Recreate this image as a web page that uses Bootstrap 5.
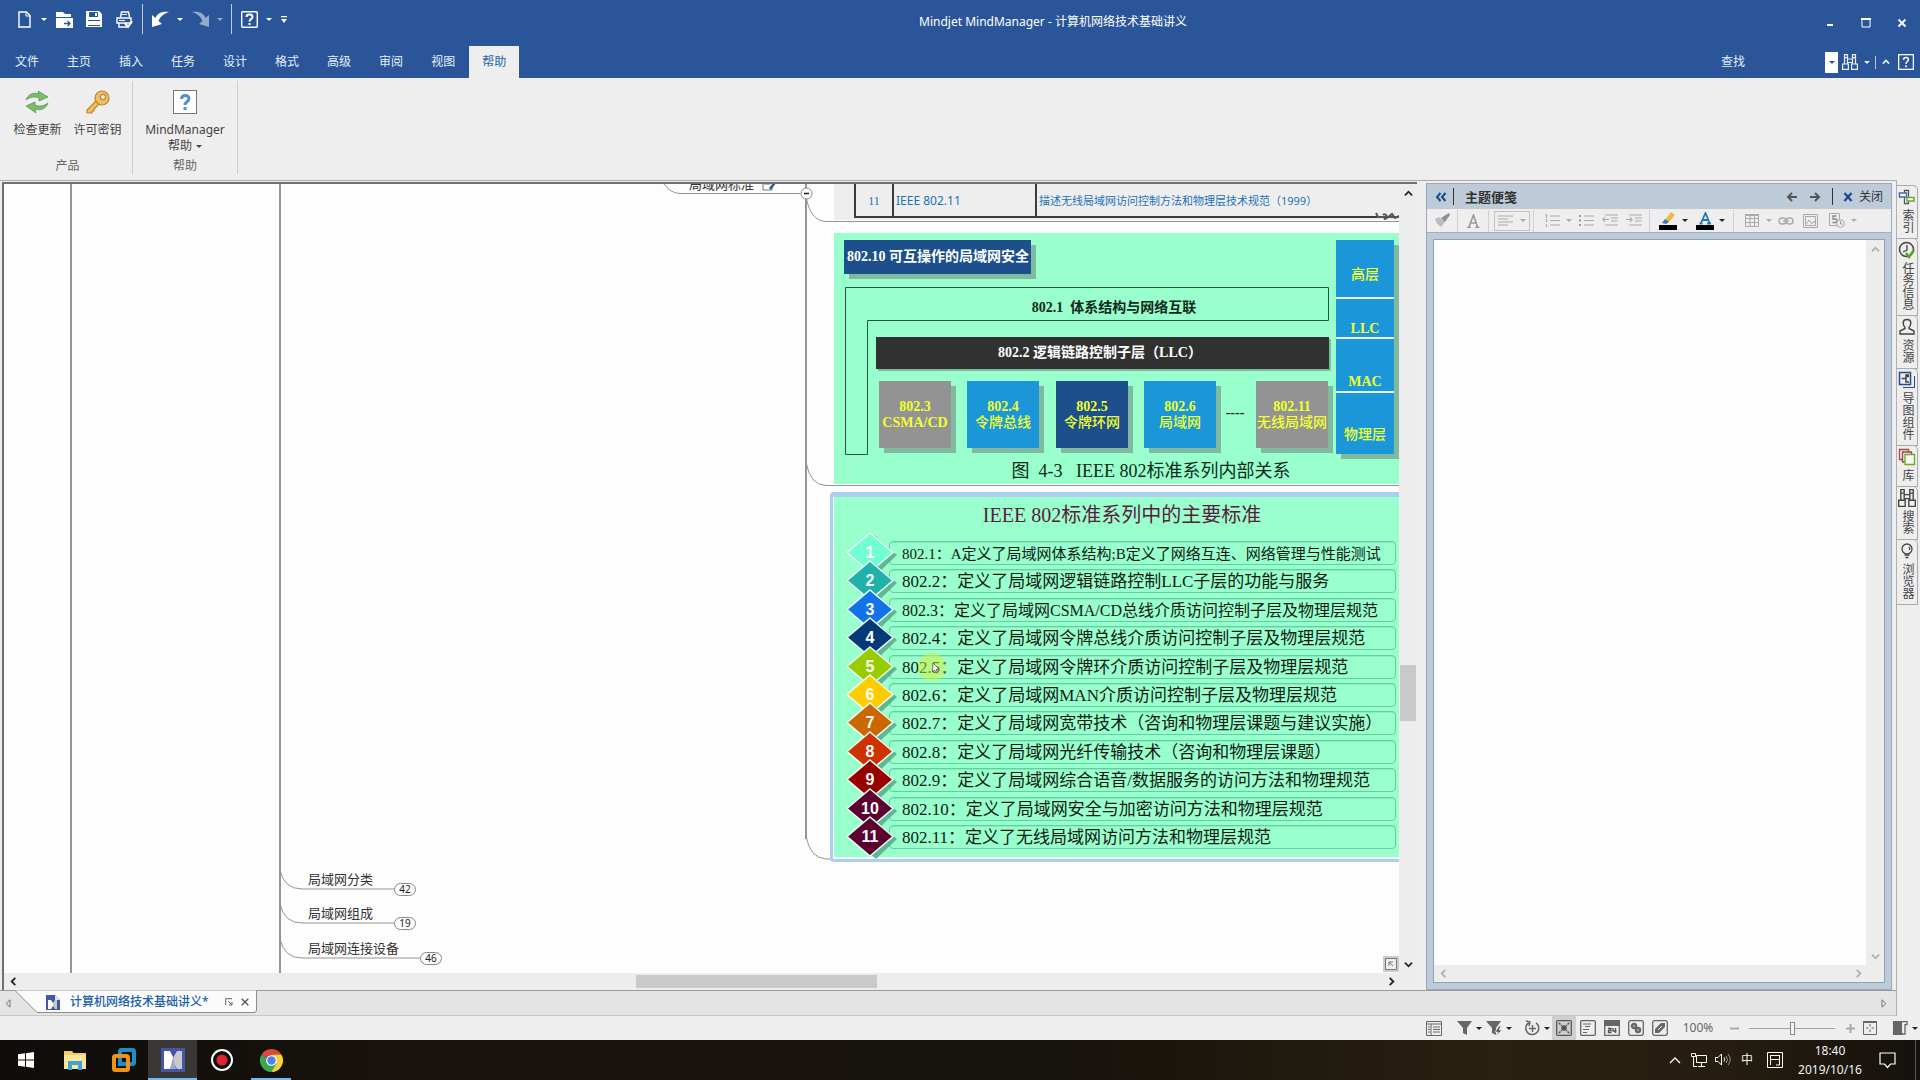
<!DOCTYPE html>
<html lang="zh-CN">
<head>
<meta charset="utf-8">
<meta name="viewport" content="width=device-width, initial-scale=1">
<title>Mindjet MindManager - 计算机网络技术基础讲义</title>
<link href="https://cdn.jsdelivr.net/npm/bootstrap@5.3.0/dist/css/bootstrap.min.css" rel="stylesheet">
<style>
  body { font-family: "Noto Sans", "Noto Sans CJK SC", sans-serif; font-size: 12px; line-height: 16px; color: #444; background: #eeeeee; }
  button, input { font: inherit; color: inherit; }
  svg { display: block; flex: none; }
  .plain { background: none; border: 0; padding: 0; display: flex; align-items: center; justify-content: center; flex: none; }
  a { color: inherit; text-decoration: none; }
  .w10 { width: 10px; } .w20 { width: 20px; } .w24 { width: 24px; } .w30 { width: 30px; }
  .gap-l { margin-left: 3px; }
  .caret { width: 0; height: 0; border: 3px solid transparent; border-top-color: currentColor; border-bottom-width: 0; }
  .shrinkable { min-height: 0; min-width: 0; }

  /* title bar and ribbon */
  .titlebar { background: #2a5699; height: 46px; color: #fff; }
  .titlebar .app-title { padding-top: 14px; }
  .quick { height: 38px; padding-left: 9px; }
  .qsep { width: 6px; height: 30px; flex: none; background: linear-gradient(#b9cbe6, #b9cbe6) center / 1px 100% no-repeat; }
  .faded { opacity: .5; }
  .winbtn { width: 36px; height: 38px; }
  .tabbar { background: #2a5699; height: 32px; color: #e6eefa; padding-left: 1px; }
  .tabbar .nav-link { color: #e6eefa; padding: 0 14px; line-height: 32px; border-radius: 0; }
  .tabbar .nav-link.active { background: #eeeeee; color: #1b66ad; padding: 0 13px; }
  .tabbar .vr { height: 13px; align-self: center; }
  .find-box { width: 80px; height: 20px; background: transparent; border: 0; outline: 0; color: #fff; }
  .find-drop { width: 13px; height: 21px; background: #fff; color: #2a5699; }
  .ribbon { height: 102px; padding: 3px 0 5px 3px; border-bottom: 1px solid #eee; }
  .rgroup { border-right: 1px solid #cdcdcd; color: #666; }
  .rgroup.g1 { width: 130px; } .rgroup.g2 { width: 105px; }
  .rbtn { flex-direction: column; justify-content: flex-start; color: #444; }
  .rbtn .glyph { height: 41px; padding-top: 9px; }
  .rbtns { gap: 12px; }

  /* workspace */
  .work { border-top: 1px solid #ababab; min-height: 0; }
  .mappane { border: solid #707070; border-width: 2px 0 0 2px; margin: 1px 0 0 2px; }
  .canvas { background: #fdfdfd; overflow: hidden; min-height: 0; }
  .vbar, .hbar { background: #ededed; }
  .vbar { width: 18px; }
  .hbar { height: 17px; }
  .hbar .before-corner { margin-right: 17px; }
  .vthumb { width: 16px; background: #c9c9c9; height: 56px; margin-top: 463px; }
  .hthumb { height: 13px; background: #c9c9c9; width: 241px; margin-left: 614px; }
  .vbtn { width: 18px; height: 18px; }
  .corner { width: 16px; height: 16px; right: 0; bottom: 1px; background: #ccc; }
  .map-node { position: absolute; white-space: nowrap; color: #222; }
  .topic { font-size: 13px; line-height: 18px; color: #333; }
  .pill { width: 22px; height: 13px; border: 1px solid #888; border-radius: 7px; background: #fdfdfd; font-size: 10px; line-height: 11px; text-align: center; }

  .std-row { left: 830px; top: 0; width: 640px; height: 36px; padding-left: 20px; background: #eeeeee; }
  .std-row table { height: 34px; border-collapse: collapse; color: #1b72b8; }
  .std-row td { border: 2px solid #3c3c3c; border-top: 0; padding: 2px 2px 0; line-height: 16px; }
  .std-row .c-name { width: 143px; }
  .std-row .c-desc { width: 420px; font-size: 11px; }
  .std-row .tnum { font-family: "Liberation Serif", serif; width: 38px; text-align: center; }

  .fig { background: #99ffcc; }
  .fig-svg { left: 830px; top: 49px; }
  .songb { font-family: "Liberation Serif", "Noto Sans CJK SC", serif; }
  .fig-list { left: 826px; top: 308px; width: 640px; border: 3px solid #abcfef; border-top-width: 5px; border-radius: 4px; padding: 0 0 2px 1px; background: #fff; }
  .fig-list .fig { height: 360px; padding: 6px 0 0 12px; width: 570px; }
  .fig-title { font-size: 20px; line-height: 24px; color: #5b1b3c; width: 552px; }
  .std-list { height: 308px; margin-top: 14px; width: 550px; }
  .std-item { height: 24px; }
  .std-box { height: 24px; line-height: 24px; border: 1px solid #5fd0a3; border-radius: 4px; box-shadow: inset 0 2px 0 -1px #86edbb; margin-left: -9px; padding-left: 12px; font-size: 17px; color: #101a16; white-space: nowrap; }
  .std-box.tight { font-size: 15px; }
  .std-box.snug { font-size: 16px; }
  .std-item svg { z-index: 1; }
  .std-item text { font: bold 16px "Liberation Sans", sans-serif; fill: #fff; text-anchor: middle; }

  /* notes pane */
  .notes { width: 466px; margin: 2px 4px 0 9px; border: 1px solid #9ba9b8; background: #bdcbd9; }
  .notes-head { height: 25px; color: #333; padding-left: 2px; }
  .hsep { width: 1px; height: 17px; background: #333; flex: none; }
  .notes-title { font-size: 13px; line-height: 16px; font-weight: 700; padding-left: 11px; }
  .notes-tools { height: 24px; background: #eeeeee; border-bottom: 1px solid #9fb0c0; padding-left: 3px; color: #aaa; }
  .tsep { width: 7px; height: 22px; flex: none; background: linear-gradient(#d0d0d0, #d0d0d0) center / 1px 100% no-repeat; }
  .align-box { width: 36px; height: 20px; border: 1px solid #c4c4c4; margin-left: 2px; gap: 7px; }
  .editor-wrap { margin: 6px; border: 1px solid #8fa2b5; background: #fff; min-height: 0; }
  .editor { border: 0; resize: none; background: #fdfdfd; outline: 0; min-height: 0; }
  .notes .vbar, .notes .hbar { color: #b0b0b0; }

  /* side tabs */
  .side { width: 24px; padding-top: 5px; border-left: 1px solid #b0b0b0; }
  .side .sidetab { width: 21px; border: 1px solid #aaa; border-left: 0; border-top-right-radius: 5px; padding: 2px 0 5px; gap: 3px; flex-direction: column; color: #444; margin-bottom: -1px; background: #eee; }
  .side .sidetab span { writing-mode: vertical-rl; line-height: 18px; }

  /* document tabs, status bar */
  .doctabs { height: 26px; background: #e4e4e4; border-top: 1px solid #9b9b9b; border-bottom: 1px solid #c6c6c6; color: #777; }
  .doctab { position: relative; height: 22px; width: 242px; padding-left: 30px; color: #1b5fa8; }
  .doctab > svg.shape { position: absolute; left: 0; top: -1px; }
  .doctab > :not(.shape) { position: relative; }
  .docname { font-weight: 500; color: #1b5fa8; padding-left: 10px; }
  .edgebtn { width: 15px; }
  .status { height: 24px; color: #666; }
  .on { background: #cfcfcf; height: 24px; }
  .zoomtext { width: 52px; text-align: center; }
  .zoom { -webkit-appearance: none; appearance: none; width: 86px; height: 14px; margin: 0 5px; background: linear-gradient(#a5a5a5, #a5a5a5) center / 100% 1px no-repeat; }
  .zoom::-webkit-slider-thumb { -webkit-appearance: none; width: 5px; height: 13px; background: #f4f4f4; border: 1px solid #8a8a8a; border-radius: 0; }
  .pane-btn { margin-left: 10px; }

  /* taskbar */
  .taskbar { height: 40px; color: #f2f2f2; padding-left: 1px; background: linear-gradient(90deg, #0f0c0a 0, #18130c 22%, #16120c 55%, #292010 78%, #251d10 90%, #15110d 100%); }
  .task { width: 49px; height: 40px; border-bottom: 2px solid transparent; padding-top: 2px; }
  .task.run { border-bottom-color: #76b9ed; }
  .task.cur { background: #3b3734; }
  .task.other { width: 40px; margin-left: 5px; }
  .clock { width: 70px; line-height: 19px; }
  .notif { width: 44px; }
  .deskedge { width: 5px; height: 40px; border-left: 1px solid #555; margin-left: 6px; }
</style>
</head>
<body>
<svg width="0" height="0" class="position-absolute">
  <defs>
    <symbol id="dia" viewBox="0 0 52 44">
      <path d="M28 4 51 24 30 44 10 26z" fill="#4f9f80" opacity=".75"/>
      <path d="M24 2 47 21.500 24 41 1 21.500z" fill="currentColor" stroke="#e8fff6" stroke-width="1.500"/>
    </symbol>
    <symbol id="up" viewBox="0 0 10 10"><path d="M1 7 5 3l4 4" fill="none" stroke="currentColor" stroke-width="2"/></symbol>
    <symbol id="down" viewBox="0 0 10 10"><path d="M1 3 5 7l4-4" fill="none" stroke="currentColor" stroke-width="2"/></symbol>
    <symbol id="left" viewBox="0 0 10 10"><path d="M7 1 3 5l4 4" fill="none" stroke="currentColor" stroke-width="2"/></symbol>
    <symbol id="right" viewBox="0 0 10 10"><path d="M3 1l4 4-4 4" fill="none" stroke="currentColor" stroke-width="2"/></symbol>
    <symbol id="binoc" viewBox="0 0 16 16"><g fill="none" stroke="currentColor" stroke-width="1.200"><path d="M2.500.600h3v3h-3zM10.500.600h3v3h-3zM2.500 3.600V10M5.500 3.600V10M10.500 3.600V10M13.500 3.600V10M.6 10h5.800v5.400H.6zM9.600 10h5.800v5.400H9.600zM5.500 5h5M5.500 8.500h5"/></g></symbol>
    <symbol id="mj" viewBox="0 0 24 24"><path fill="#4357a5" d="M0 0h24v24H0z"/><path fill="#fff" d="M3 3h6l3 6v6l-3 6H3z"/><path fill="#c8c8cf" d="M21 3h-5l-4 7v4l4 7h5z"/><path fill="#9fa6c8" d="m12 9 3 12H9z"/></symbol>
  </defs>
</svg>

<div class="d-flex flex-column vh-100 overflow-hidden">

  <header class="titlebar d-flex">
    <div class="quick d-flex align-items-center" role="toolbar" aria-label="快速访问">
      <button class="plain w30" aria-label="新建"><svg width="13" height="17" viewBox="0 0 13 17"><path d="M1 1h7.500l3.500 3.500V16H1z" fill="none" stroke="#fff" stroke-width="1.400"/><path d="M8 1v4h4" fill="none" stroke="#fff"/></svg></button>
      <button class="plain w10" aria-label="新建选项"><span class="caret"></span></button>
      <button class="plain w30" aria-label="打开"><svg width="17" height="17" viewBox="0 0 17 17"><path fill="#fff" d="M0 1h7l2 2h6v3H0zM0 7h17v10H0z"/><path d="M8 12.500h6m-2.500-2.500 2.500 2.500-2.500 2.500" stroke="#2a5699" fill="none" stroke-width="1.300"/></svg></button>
      <button class="plain w30" aria-label="保存"><svg width="16" height="16" viewBox="0 0 16 16"><path fill="#fff" d="M0 0h13l3 3v13H0z"/><path fill="#2a5699" d="M3 1h9v5H3zM2 9h12v1H2zM2 14h12v1H2z"/><path fill="#fff" d="M9 2h2v3H9z"/></svg></button>
      <button class="plain w30" aria-label="打印"><svg width="17" height="17" viewBox="0 0 17 17"><path d="M4.500 6 5.500 1h7l1 5M1 7h14v5H1zM3 12v4h8" fill="none" stroke="#fff" stroke-width="1.400"/><path d="M6 3.500h5M3 9.500h6" stroke="#fff"/><path d="m9 12 3 4 4-6" stroke="#fff" stroke-width="2.200" fill="none"/></svg></button>
      <span class="qsep"></span>
      <button class="plain w30" aria-label="撤销"><svg width="17" height="16" viewBox="0 0 17 16"><path fill="#fff" d="M17 1C9 0 5 3 3.500 7L0 4v12l10-3-3.500-3C8 6 11 3 17 1z"/></svg></button>
      <button class="plain w10" aria-label="撤销选项"><span class="caret"></span></button>
      <button class="plain w30 faded" aria-label="恢复"><svg width="17" height="16" viewBox="0 0 17 16"><path fill="#fff" d="M0 1c8-1 12 2 13.500 6L17 4v12L7 13l3.500-3C9 6 6 3 0 1z"/></svg></button>
      <button class="plain w10 faded" aria-label="恢复选项"><span class="caret"></span></button>
      <span class="qsep gap-l"></span>
      <button class="plain w30" aria-label="帮助"><svg width="17" height="17" viewBox="0 0 17 17"><rect x=".7" y=".7" width="15.600" height="15.600" fill="none" stroke="#fff" stroke-width="1.400" rx="1"/><path d="M5.500 6C5.500 2.800 11.500 2.800 11.500 6c0 2-3 2-3 4.500M8.500 12v2" fill="none" stroke="#fff" stroke-width="2"/></svg></button>
      <button class="plain w10" aria-label="帮助选项"><span class="caret"></span></button>
      <button class="plain w20" aria-label="自定义"><svg width="8" height="9" viewBox="0 0 8 9"><path fill="#fff" d="M1 1h6v1.300H1zM1 4h6L4 8z"/></svg></button>
    </div>
    <div class="app-title flex-fill text-center">Mindjet MindManager - 计算机网络技术基础讲义</div>
    <div class="d-flex pt-1">
      <button class="plain winbtn" aria-label="最小化"><svg width="10" height="10"><path d="M2 6h6v2H2z" fill="#fff"/></svg></button>
      <button class="plain winbtn" aria-label="最大化"><svg width="10" height="10"><path d="M1 1.500h8v7.500H1z" fill="none" stroke="#fff"/><path d="M0 0h10v2H0z" fill="#fff"/></svg></button>
      <button class="plain winbtn" aria-label="关闭窗口"><svg width="10" height="10"><path d="m1.500 1.500 7 7m0-7-7 7" stroke="#fff" stroke-width="1.800"/></svg></button>
    </div>
  </header>

  <nav class="tabbar d-flex">
    <div class="nav">
      <a class="nav-link" href="#">文件</a><a class="nav-link" href="#">主页</a><a class="nav-link" href="#">插入</a><a class="nav-link" href="#">任务</a><a class="nav-link" href="#">设计</a><a class="nav-link" href="#">格式</a><a class="nav-link" href="#">高级</a><a class="nav-link" href="#">审阅</a><a class="nav-link" href="#">视图</a><a class="nav-link active" href="#">帮助</a>
    </div>
    <div class="ms-auto d-flex align-items-center gap-0">
      <label for="find">查找</label><input id="find" class="find-box" type="text">
      <button class="plain find-drop" aria-label="查找历史"><span class="caret"></span></button>
      <button class="plain w24" aria-label="查找"><svg width="16" height="16"><use href="#binoc"/></svg></button>
      <button class="plain w10" aria-label="查找选项"><span class="caret"></span></button>
      <span class="vr gap-l opacity-75"></span>
      <button class="plain w20" aria-label="折叠功能区"><svg width="8" height="8"><use href="#up"/></svg></button>
      <button class="plain w20 me-1" aria-label="联机帮助"><svg width="16" height="16" viewBox="0 0 17 17"><rect x=".7" y=".7" width="15.600" height="15.600" fill="none" stroke="#fff" stroke-width="1.300"/><path d="M6 6c0-3 5-3 5 0 0 2-2.500 2-2.500 4.500M8.500 12v2" fill="none" stroke="#fff" stroke-width="1.600"/></svg></button>
    </div>
  </nav>

  <section class="ribbon d-flex">
    <div class="rgroup g1 d-flex flex-column align-items-center justify-content-between">
      <div class="rbtns d-flex">
        <button class="plain rbtn"><span class="glyph"><svg width="24" height="24" viewBox="0 0 24 24"><g fill="#7dbb6c" stroke="#5d9a4f" stroke-width=".8"><path d="M1 10C3 4 9 2 14 4l-1-3 10 6-9 4 0-3C10 6 5 7 1 10z"/><path d="M23 13c-2 6-8 8-13 6l1 4-10-7 9-4v3c4 2 9 1 13-2z"/></g></svg></span>检查更新</button>
        <button class="plain rbtn"><span class="glyph"><svg width="24" height="24" viewBox="0 0 24 24"><g fill="#f2be62" stroke="#b98530" stroke-width="1.200"><path d="M11 10 1 20v3h5v-2h2v-2l6-6z"/><circle cx="16" cy="8" r="7"/><circle cx="17" cy="7" r="2.600" fill="#eee"/></g></svg></span>许可密钥</button>
      </div>
      <div>产品</div>
    </div>
    <div class="rgroup g2 d-flex flex-column align-items-center justify-content-between">
      <button class="plain rbtn"><span class="glyph"><svg width="24" height="24" viewBox="0 0 24 24"><rect x=".5" y=".5" width="23" height="23" fill="#fff" stroke="#777"/><path d="M8.500 9C8.500 4 16 4.500 16 8.500c0 3.500-4 3-4 6.500M12 17v3" fill="none" stroke="#5590cc" stroke-width="3"/></svg></span>MindManager<span class="d-flex align-items-center gap-1">帮助 <span class="caret"></span></span></button>
      <div>帮助</div>
    </div>
  </section>

  <div class="d-flex flex-fill shrinkable">
    <div class="d-flex flex-column flex-fill shrinkable">
      <main class="work d-flex flex-fill">
        <div class="mappane shrinkable d-flex flex-column flex-fill">
          <div class="d-flex flex-fill shrinkable">
            <div class="canvas position-relative flex-fill">
              <svg class="position-absolute" width="1396" height="790" viewBox="4 184 1396 790" fill="none" stroke="#959595">
                <path d="M71 184v790M280 184v790M806 184v655" stroke-width="2"/>
                <path d="M280 870q4 19 22 19h93M280 904q4 19 22 19h93M280 939q4 19 22 19h119M664 184q6 9 16 9.500h120M806 196q4 25 20 25.500h574M806 462q4 23 20 23.500h574M806 836q4 22 20 23h10"/>
              </svg>
              <div class="map-node topic" style="left:304px;top:686px">局域网分类</div>
              <div class="map-node topic" style="left:304px;top:720px">局域网组成</div>
              <div class="map-node topic" style="left:304px;top:755px">局域网连接设备</div>
              <div class="map-node pill" style="left:390px;top:699px">42</div>
              <div class="map-node pill" style="left:390px;top:733px">19</div>
              <div class="map-node pill" style="left:416px;top:768px">46</div>
              <div class="map-node topic d-flex gap-2" style="left:685px;top:-9px">局域网标准<svg width="17" height="18" viewBox="0 0 17 18"><path d="M1 3h9M2 6h7M2 9h6M1 3v12h9v-3" stroke="#777" fill="none"/><path d="m8 14 6-8" stroke="#2d5a96" stroke-width="2.500"/></svg></div>
              <svg class="map-node" style="left:796px;top:3px" width="13" height="13"><circle cx="6.500" cy="6.500" r="5.500" fill="#fff" stroke="#888"/><path d="M4 6.500h5" stroke="#222" stroke-width="1.500"/></svg>

              <div class="map-node std-row">
                <table><tr><td class="tnum">11</td><td class="c-name">IEEE 802.11</td><td class="c-desc">描述无线局域网访问控制方法和物理层技术规范（1999）</td></tr></table>
              </div>
              <svg class="map-node" style="left:1370px;top:26px" width="28" height="12"><path d="M2 3l2 4h6l1 2M9 5c3-3 6 4 1 4M13 8l5-4 3 4 6-3M5 7h20" fill="none" stroke="#555" stroke-width="2"/></svg>

              <svg class="map-node fig-svg songb" width="567" height="251" viewBox="834 233 567 251" font-weight="bold" font-size="14" text-anchor="middle">
                <path fill="#99ffcc" d="M834 233h567v251H834z"/>
                <g fill="#7fb9a0">
                  <path d="M849 245h187v34H849zM884 386h72v67h-72zM972 386h72v67h-72zM1061 386h72v67h-72zM1149 386h72v67h-72zM1261 386h72v67h-72zM1341 245h58v214h-58zM878 339h453v32H878z"/>
                </g>
                <path fill="#1c4f8c" d="M844 240h187v34H844zM1056 381h72v67h-72z"/>
                <path fill="#1b97d9" d="M967 381h72v67h-72zM1144 381h72v67h-72zM1336 240h58v214h-58z"/>
                <path fill="#939393" d="M879 381h72v67h-72zM1256 381h72v67h-72z"/>
                <path fill="#313131" d="M876 337h453v32H876z"/>
                <path fill="none" stroke="#e8f8ff" stroke-width="2" d="M1336 298h58M1336 338h58M1336 392h58"/>
                <path fill="none" stroke="#1d5c43" d="M845.500 454.500v-167h483v33h-461v134z"/>
                <g fill="#fff"><text x="938" y="261">802.10 可互操作的局域网安全</text><text x="1100" y="357">802.2 逻辑链路控制子层（LLC）</text></g>
                <text x="1114" y="312" fill="#102a20" xml:space="preserve">802.1  体系结构与网络互联</text>
                <g fill="#f2ff30">
                  <text x="915" y="411">802.3</text><text x="915" y="427">CSMA/CD</text>
                  <text x="1003" y="411">802.4</text><text x="1003" y="427" font-weight="500">令牌总线</text>
                  <text x="1092" y="411">802.5</text><text x="1092" y="427" font-weight="500">令牌环网</text>
                  <text x="1180" y="411">802.6</text><text x="1180" y="427" font-weight="500">局域网</text>
                  <text x="1292" y="411">802.11</text><text x="1292" y="427" font-weight="500">无线局域网</text>
                  <text x="1365" y="279" font-weight="500">高层</text><text x="1365" y="333">LLC</text><text x="1365" y="386">MAC</text><text x="1365" y="439" font-weight="500">物理层</text>
                </g>
                <text x="1235" y="417" fill="#222">----</text>
                <text x="1151" y="477" fill="#102a20" font-size="18" font-weight="400" xml:space="preserve">图  4-3   IEEE 802标准系列内部关系</text>
              </svg>

              <div class="map-node fig-list">
                <div class="fig songb">
                  <div class="fig-title text-center">IEEE 802标准系列中的主要标准</div>
                  <div class="std-list d-flex flex-column justify-content-between">
                    <div class="std-item d-flex align-items-center"><svg class="position-relative" width="52" height="44" color="#70ffd0"><use href="#dia"/><text x="24" y="27">1</text></svg><div class="std-box flex-fill tight">802.1：A定义了局域网体系结构;B定义了网络互连、网络管理与性能测试</div></div>
                    <div class="std-item d-flex align-items-center"><svg class="position-relative" width="52" height="44" color="#20b2aa"><use href="#dia"/><text x="24" y="27">2</text></svg><div class="std-box flex-fill">802.2：定义了局域网逻辑链路控制LLC子层的功能与服务</div></div>
                    <div class="std-item d-flex align-items-center"><svg class="position-relative" width="52" height="44" color="#1272ea"><use href="#dia"/><text x="24" y="27">3</text></svg><div class="std-box flex-fill snug">802.3：定义了局域网CSMA/CD总线介质访问控制子层及物理层规范</div></div>
                    <div class="std-item d-flex align-items-center"><svg class="position-relative" width="52" height="44" color="#053a78"><use href="#dia"/><text x="24" y="27">4</text></svg><div class="std-box flex-fill">802.4：定义了局域网令牌总线介质访问控制子层及物理层规范</div></div>
                    <div class="std-item d-flex align-items-center"><svg class="position-relative" width="52" height="44" color="#99cc00"><use href="#dia"/><text x="24" y="27">5</text></svg><div class="std-box flex-fill">802.5：定义了局域网令牌环介质访问控制子层及物理层规范</div></div>
                    <div class="std-item d-flex align-items-center"><svg class="position-relative" width="52" height="44" color="#ffcc00"><use href="#dia"/><text x="24" y="27">6</text></svg><div class="std-box flex-fill">802.6：定义了局域网MAN介质访问控制子层及物理层规范</div></div>
                    <div class="std-item d-flex align-items-center"><svg class="position-relative" width="52" height="44" color="#cc6600"><use href="#dia"/><text x="24" y="27">7</text></svg><div class="std-box flex-fill">802.7：定义了局域网宽带技术（咨询和物理层课题与建议实施）</div></div>
                    <div class="std-item d-flex align-items-center"><svg class="position-relative" width="52" height="44" color="#cc3300"><use href="#dia"/><text x="24" y="27">8</text></svg><div class="std-box flex-fill">802.8：定义了局域网光纤传输技术（咨询和物理层课题）</div></div>
                    <div class="std-item d-flex align-items-center"><svg class="position-relative" width="52" height="44" color="#990000"><use href="#dia"/><text x="24" y="27">9</text></svg><div class="std-box flex-fill">802.9：定义了局域网综合语音/数据服务的访问方法和物理规范</div></div>
                    <div class="std-item d-flex align-items-center"><svg class="position-relative" width="52" height="44" color="#5c0030"><use href="#dia"/><text x="24" y="27">10</text></svg><div class="std-box flex-fill">802.10：定义了局域网安全与加密访问方法和物理层规范</div></div>
                    <div class="std-item d-flex align-items-center"><svg class="position-relative" width="52" height="44" color="#5c0030"><use href="#dia"/><text x="24" y="27">11</text></svg><div class="std-box flex-fill">802.11：定义了无线局域网访问方法和物理层规范</div></div>
                  </div>
                </div>
              </div>
              <svg class="map-node" style="left:913px;top:468px" width="30" height="30"><circle cx="15" cy="15" r="14" fill="#d8f038" opacity=".5"/><path d="m16 11 6 6-3 .4 1.500 3-1.500.6-1.500-3-2 2z" fill="#fff" stroke="#333" stroke-width=".7"/></svg>
              <button class="plain corner position-absolute" aria-label="导航窗口"><svg width="12" height="12"><path d="M.5.500h11v11H.5z" fill="#eee" stroke="#777"/><path d="M4 8V4h4M4 4l4 4" fill="none" stroke="#777"/></svg></button>
            </div>
            <div class="vbar d-flex flex-column align-items-center text-dark">
              <button class="plain vbtn" aria-label="向上滚动"><svg width="9" height="9"><use href="#up"/></svg></button>
              <div class="vthumb"></div>
              <button class="plain vbtn mt-auto" aria-label="向下滚动"><svg width="9" height="9"><use href="#down"/></svg></button>
            </div>
          </div>
          <div class="hbar d-flex align-items-center text-dark">
            <button class="plain vbtn" aria-label="向左滚动"><svg width="9" height="9"><use href="#left"/></svg></button>
            <div class="hthumb"></div>
            <button class="plain vbtn ms-auto before-corner" aria-label="向右滚动"><svg width="9" height="9"><use href="#right"/></svg></button>
          </div>
        </div>

        <aside class="notes d-flex flex-column flex-shrink-0">
          <div class="notes-head d-flex align-items-center">
            <button class="plain w24" aria-label="收起"><svg width="12" height="10"><path d="M5.500 1 2 5l3.500 4M10.500 1 7 5l3.500 4" fill="none" stroke="#154a8c" stroke-width="2"/></svg></button>
            <span class="hsep"></span>
            <span class="notes-title">主题便笺</span>
            <button class="plain w24 ms-auto" aria-label="上一个"><svg width="11" height="10"><path d="M6 1 2 5l4 4M2 5h9" fill="none" stroke="#555" stroke-width="2"/></svg></button>
            <button class="plain w24" aria-label="下一个"><svg width="11" height="10"><path d="m5 1 4 4-4 4M9 5H0" fill="none" stroke="#555" stroke-width="2"/></svg></button>
            <span class="hsep ms-1 me-2"></span>
            <button class="plain gap-1 pe-2"><svg width="14" height="10"><path d="m3.500 1 7 8m0-8-7 8" stroke="#154a8c" stroke-width="2.200"/></svg>关闭</button>
          </div>
          <div class="notes-tools d-flex align-items-center" role="toolbar" aria-label="便笺工具">
            <button class="plain w24" aria-label="格式刷"><svg width="15" height="15"><path d="m0 6 4-2 6 5-4 5C3 12 1 10 0 6z" fill="#bdbdbd"/><path d="m6 5 3-2 5-3 1 2-3 4-2 3z" fill="#8f8f8f"/></svg></button>
            <span class="tsep"></span>
            <button class="plain w24" aria-label="字体"><svg width="14" height="14"><path d="M1 13.500h4M9 13.500h4.500M3 13 7.500 1l4 12M4.500 9h6" fill="none" stroke="#999" stroke-width="1.600"/></svg></button>
            <span class="tsep"></span>
            <button class="plain align-box" aria-label="对齐"><svg width="15" height="11"><path d="M0 1h15M0 4h10M0 7h15M0 10h10" stroke="#aaa"/></svg><span class="caret"></span></button>
            <span class="tsep"></span>
            <button class="plain w24 gap-l" aria-label="编号"><svg width="15" height="13"><path d="M5 2h10M5 6.500h10M5 11h10M1.500 0v4M1.500 5v3M1.500 10v3" stroke="#aaa" stroke-width="1.200"/></svg></button>
            <button class="plain w10" aria-label="编号选项"><span class="caret"></span></button>
            <button class="plain w24" aria-label="项目符号"><svg width="15" height="13"><path d="M5 2h10M5 6.500h10M5 11h10" stroke="#aaa" stroke-width="1.200"/><path d="M0 1h2v2H0zM0 5.500h2v2H0zM0 10h2v2H0z" fill="#999"/></svg></button>
            <button class="plain w24" aria-label="减少缩进"><svg width="16" height="13"><path d="M3 1h13M9 4h7M9 7h7M3 11h13M7 5.500H1M3 3 1 5.500 3 8" stroke="#aaa" stroke-width="1.200" fill="none"/></svg></button>
            <button class="plain w24" aria-label="增加缩进"><svg width="16" height="13"><path d="M3 1h13M9 4h7M9 7h7M3 11h13M0 5.500h6M4 3l2 2.500L4 8" stroke="#aaa" stroke-width="1.200" fill="none"/></svg></button>
            <span class="tsep"></span>
            <button class="plain w24 gap-l" aria-label="突出显示"><svg width="18" height="18"><path fill="#000" d="M0 13h18v5H0z"/><path fill="#f0b93a" d="m6 8 6-8 4 3-6 7z"/><path fill="#3f74b5" d="m3 11 3-4 4 3-3 2z"/></svg></button>
            <button class="plain w10 text-dark" aria-label="突出显示颜色"><span class="caret"></span></button>
            <button class="plain w24 gap-l" aria-label="字体颜色"><svg width="18" height="18"><path fill="#000" d="M0 13h18v5H0z"/><path d="M3.500 11.500h3M11 11.500h4M5 11 9.500 1l4 10M6.500 8h6" fill="none" stroke="#2477bd" stroke-width="1.800"/></svg></button>
            <button class="plain w10 text-dark" aria-label="更多颜色"><span class="caret"></span></button>
            <span class="tsep gap-l"></span>
            <button class="plain w24 gap-l" aria-label="表格"><svg width="14" height="13"><path d="M.5.500h13v12H.5zM.5 4.500h13M.5 8.500h13M5 1v12M9.500 1v12" fill="none" stroke="#aaa"/><path fill="#aaa" d="M0 0h14v2H0z"/></svg></button>
            <button class="plain w10" aria-label="表格选项"><span class="caret"></span></button>
            <button class="plain w24" aria-label="链接"><svg width="16" height="8"><g fill="none" stroke="#aaa" stroke-width="1.500"><rect x="1" y="1" width="7" height="6" rx="3"/><rect x="8" y="1" width="7" height="6" rx="3"/><path d="M5 4h6"/></g></svg></button>
            <button class="plain w24" aria-label="图像"><svg width="15" height="14"><path d="M.5.500h14v13H.5zM2.500 2.500h10v9h-10zM3 10l3-4 3 4 2-3 2 3" fill="none" stroke="#aaa"/></svg></button>
            <button class="plain w24 gap-l" aria-label="日期和时间"><svg width="16" height="15"><path d="M.5.500h10v12H.5z" fill="none" stroke="#aaa"/><path d="M7.500 3H4v3h2.500c2 0 2 3.500 0 3.500H3.500" fill="none" stroke="#888" stroke-width="1.300"/><circle cx="11.500" cy="10.500" r="3.800" fill="#eee" stroke="#aaa"/><path d="M11.500 8v3h2" fill="none" stroke="#999"/></svg></button>
            <button class="plain w10" aria-label="日期选项"><span class="caret"></span></button>
          </div>
          <div class="editor-wrap d-flex flex-column flex-fill">
            <div class="d-flex flex-fill shrinkable">
              <textarea class="editor flex-fill" aria-label="主题便笺"></textarea>
              <div class="vbar d-flex flex-column justify-content-between align-items-center">
                <button class="plain vbtn" aria-label="便笺向上"><svg width="9" height="9"><use href="#up"/></svg></button>
                <button class="plain vbtn" aria-label="便笺向下"><svg width="9" height="9"><use href="#down"/></svg></button>
              </div>
            </div>
            <div class="hbar d-flex justify-content-between align-items-center">
              <button class="plain vbtn" aria-label="便笺向左"><svg width="9" height="9"><use href="#left"/></svg></button>
              <button class="plain vbtn before-corner" aria-label="便笺向右"><svg width="9" height="9"><use href="#right"/></svg></button>
            </div>
          </div>
        </aside>
      </main>

      <div class="doctabs d-flex">
        <button class="plain edgebtn align-self-center" aria-label="上一个标签"><svg width="6" height="9"><path d="M5 .8v7.400L1 4.500z" fill="none" stroke="#777"/></svg></button>
        <div class="doctab d-flex align-items-center">
          <svg class="shape" width="242" height="24"><path d="M0 .5 22 22.500h217q2.500 0 2.500-2.500V.5" fill="#fbfbfb" stroke="#8d8d8d"/></svg>
          <svg width="15" height="15" viewBox="0 0 15 15"><path fill="#4357a5" d="M1 0h9l5 5v10H1z"/><path fill="#fff" d="M3 5h3l2 3v3l-2 3H3z"/><path fill="#c8c8cf" d="M12 5h-2L8 8v3l2 3h2z"/><path fill="#dfe3f2" d="M10 0v5h5z"/></svg>
          <a class="docname" href="#">计算机网络技术基础讲义*</a>
          <button class="plain ms-3" aria-label="浮动窗口"><svg width="8" height="8"><path d="M.7 7V.7H7M3 3l4 4M7 4v3H4" fill="none" stroke="#666"/></svg></button>
          <button class="plain ms-auto me-2" aria-label="关闭标签"><svg width="8" height="8"><path d="m.7.700 6.600 6.600m0-6.600L.7 7.300" stroke="#555" stroke-width="1.300"/></svg></button>
        </div>
        <button class="plain ms-auto w24 align-self-center" aria-label="下一个标签"><svg width="6" height="9"><path d="M1 .8v7.400l4-3.700z" fill="none" stroke="#777"/></svg></button>
      </div>
    </div>

    <nav class="side flex-shrink-0">
      <button class="plain sidetab"><svg width="18" height="18" viewBox="0 0 18 18" fill="#fff"><path d="M6.500 2.500h4v13h-4z" stroke="#555" stroke-width="1.300"/><path d="M1.500 5h7v4h-7z" stroke="#3a6db0" stroke-width="1.500"/><path d="M9 9.500h7v3.500H9z" stroke="#6aaa28" stroke-width="1.500"/></svg><span>索引</span></button>
      <button class="plain sidetab"><svg width="18" height="18" fill="none"><circle cx="8.500" cy="8.500" r="7" stroke="#444" stroke-width="1.500"/><path d="M9 4v5l-4 2" stroke="#444" stroke-width="1.300"/><path d="m8 12 3 4 5-7" stroke="#59a022" stroke-width="2.400"/></svg><span>任务信息</span></button>
      <button class="plain sidetab"><svg width="18" height="18" fill="none" stroke="#444" stroke-width="1.400"><path d="M9 1.500c-5 0-4.500 5-2 8v1L2 13v3h14v-3l-5-2.500v-1c2.500-3 3-8-2-8z"/></svg><span>资源</span></button>
      <button class="plain sidetab"><svg width="18" height="18" fill="none"><path d="M1.500 1.500h11v12h-11z" stroke="#234a94" stroke-width="1.500"/><path d="M5 16.500h11.500V5" stroke="#234a94"/><path d="M11 4H8v7h3M8 7.500H3.500M8 5.500h3" stroke="#444" stroke-width="1.500"/></svg><span>导图组件</span></button>
      <button class="plain sidetab"><svg width="18" height="18" fill="#eee" stroke-width="1.300"><path d="M1.500 1.500h9v10h-9z" stroke="#b04a36"/><path d="M4.500 4h9v10h-9z" stroke="#8a4a46"/><path d="M7 6.500h9.500v10H7z" stroke="#6aaa28" fill="#f4f9ee"/></svg><span>库</span></button>
      <button class="plain sidetab"><svg width="18" height="18"><use href="#binoc"/></svg><span>搜索</span></button>
      <button class="plain sidetab"><svg width="18" height="18" fill="none" stroke="#444" stroke-width="1.300"><circle cx="9" cy="7" r="5"/><path d="M6.500 13h5M7.500 15.500h3M11 5q1 1 .5 3"/></svg><span>浏览器</span></button>
    </nav>
  </div>

  <footer class="status d-flex align-items-center justify-content-end">
    <button class="plain w24" aria-label="大纲"><svg width="16" height="15" stroke="#666" fill="none"><path d="M.5.500h15v14H.5zM.5 3h15M5 3v11M7 6h7M7 8.500h7M7 11h7M2 6h2M2 8.500h2M2 11h2"/></svg></button>
    <button class="plain w20 ms-2" aria-label="筛选"><svg width="15" height="14"><path fill="#666" d="M0 0h15L10 7v7l-4-2V7z"/></svg></button>
    <button class="plain w10 text-dark" aria-label="筛选选项"><span class="caret"></span></button>
    <button class="plain w20" aria-label="快速筛选"><svg width="16" height="15"><path fill="#666" d="M0 0h15l-5 7v7l-4-2V7z"/><path d="m13 5-4 6h3l-2 4 6-6h-3l2-4z" fill="#555" stroke="#eee" stroke-width=".7"/></svg></button>
    <button class="plain w10 text-dark" aria-label="快速筛选选项"><span class="caret"></span></button>
    <button class="plain w20 ms-2" aria-label="详细级别"><svg width="17" height="16" stroke="#666" fill="none" stroke-width="1.500"><path d="M5 2.500a6.500 6.500 0 1 0 7 .3M2 1l4 1-1 4M8.500 5v7M5 8.500h7"/></svg></button>
    <button class="plain w10 text-dark" aria-label="级别选项"><span class="caret"></span></button>
    <button class="plain w24 on" aria-label="导图视图"><svg width="16" height="16" stroke="#555" fill="none"><rect x=".7" y=".7" width="14.600" height="14.600" rx="1" stroke-width="1.300"/><path d="m3 3 3 3m7-3-3 3M3 13l3-3m7 3-3-3" stroke-width="1.500" stroke-dasharray="2 1"/><circle cx="8" cy="8" r="2.300" fill="#555"/></svg></button>
    <button class="plain w24" aria-label="大纲视图"><svg width="16" height="16" stroke="#666" fill="none"><rect x=".7" y=".7" width="14.600" height="14.600" rx="1" stroke-width="1.300"/><path d="M3 4h8M5 6.500h5M3 9.500h6M3 12.500h4"/></svg></button>
    <button class="plain w24" aria-label="日程视图"><svg width="16" height="16"><path d="M.7.700h14.600v14.600H.7z" fill="none" stroke="#666" stroke-width="1.300"/><path fill="#666" d="M0 0h16v6H0z"/><path d="M4 8.500h3v2H4.500v2H7.500M9 8v3h3.500M11.500 8v5" fill="none" stroke="#555" stroke-width="1.300"/></svg></button>
    <button class="plain w24" aria-label="链接视图"><svg width="16" height="16" fill="none" stroke="#666"><rect x=".7" y=".7" width="14.600" height="14.600" rx="2" stroke-width="1.300"/><circle cx="6" cy="6" r="2" stroke-width="2.400"/><circle cx="10" cy="10" r="2" stroke-width="2.400"/></svg></button>
    <button class="plain w24" aria-label="标记视图"><svg width="16" height="16"><rect x=".7" y=".7" width="14.600" height="14.600" rx="2" fill="none" stroke="#666" stroke-width="1.300"/><path d="m3 9 6-6h4v4l-6 6H3z" fill="#666"/><path d="m6 10 4-4" stroke="#eee"/></svg></button>
    <span class="zoomtext">100%</span>
    <button class="plain w20" aria-label="缩小"><svg width="9" height="9"><path d="M0 4.500h9" stroke="#aaa" stroke-width="2"/></svg></button>
    <input class="zoom" type="range" min="0" max="100" value="50" aria-label="缩放">
    <button class="plain w20" aria-label="放大"><svg width="9" height="9"><path d="M0 4.500h9M4.500 0v9" stroke="#aaa" stroke-width="2"/></svg></button>
    <button class="plain w20" aria-label="适合页面"><svg width="14" height="14" stroke="#666" fill="none"><path d="M.5.500h13v13H.5zM7 3v2.500M7 8.500V11M3 7h2.500M8.500 7H11"/><path d="M0 1h14" stroke-width="2"/></svg></button>
    <button class="plain w20 pane-btn" aria-label="任务窗格"><svg width="15" height="14"><path fill="#666" d="M0 0h9v14H0z"/><path d="M9 .7h5v3h-2V13H9" fill="none" stroke="#666" stroke-width="1.300"/></svg></button>
    <button class="plain w10 text-dark" aria-label="窗格选项"><span class="caret"></span></button>
  </footer>

  <div class="taskbar d-flex align-items-center">
    <button class="plain task" aria-label="开始"><svg width="16" height="16"><path fill="#fff" d="m0 2.300 7-1v6.200H0zM8 1.200 16 0v7.500H8zM0 8.500h7v6.200l-7-1zM8 8.500h8V16l-8-1.200z"/></svg></button>
    <button class="plain task" aria-label="文件资源管理器"><svg width="22" height="19"><path fill="#f3ce63" d="M0 0h8l1.500 2H22v16H0z"/><path fill="#fae59c" d="M0 4h22v14H0z"/><path fill="#3fa3d4" d="M4 10h14v9h-4v-5H8v5H4z"/></svg></button>
    <button class="plain task" aria-label="虚拟机"><svg width="24" height="24" fill="none" stroke-width="4"><rect x="8" y="2" width="14" height="14" rx="1.500" stroke="#1d8fc6"/><rect x="2" y="8" width="14" height="14" rx="1.500" stroke="#ec9417"/><path d="M8 10v6h5" stroke="#1d8fc6"/></svg></button>
    <button class="plain task run cur" aria-label="MindManager"><svg width="24" height="24"><use href="#mj"/></svg></button>
    <button class="plain task" aria-label="录屏"><svg width="24" height="24"><circle cx="12" cy="12" r="10" fill="#111" stroke="#fff" stroke-width="2"/><circle cx="12" cy="12" r="5.500" fill="#e0262b"/></svg></button>
    <button class="plain task run other" aria-label="Chrome"><svg width="23" height="23" viewBox="0 0 24 24"><path fill="#d94a3c" d="M12 12 1.600 6A12 12 0 0 1 22.400 6z"/><path fill="#f8cf3b" d="M12 12V6h10.400A12 12 0 0 1 12 24z"/><path fill="#3ca653" d="M1.600 6A12 12 0 0 0 12 24l5.200-9L12 12z"/><circle cx="12" cy="12" r="5.600" fill="#fff"/><circle cx="12" cy="12" r="4.400" fill="#4a83ec"/></svg></button>
    <div class="ms-auto d-flex align-items-center">
      <button class="plain w24" aria-label="显示隐藏图标"><svg width="12" height="8"><path d="m1 7 5-5 5 5" fill="none" stroke="#fff" stroke-width="1.300"/></svg></button>
      <button class="plain w24" aria-label="网络"><svg width="16" height="14" fill="none" stroke="#fff"><path d="M5.500 2.500h10v7h-10zM10.500 9.500v4M7 13.500h7M.5.500h4v3h-4zM2.500 3.500v10H6"/></svg></button>
      <button class="plain w24" aria-label="音量"><svg width="16" height="14" fill="none" stroke="#fff"><path d="M.5 4.500H3l3.500-3.500v11L3 8.500H.5zM9 4.500q1.500 2 0 4"/><path d="M11 3q3 3.500 0 7M13 1q4.500 5.500 0 11" stroke="#999"/></svg></button>
      <button class="plain w24">中</button>
      <button class="plain w24 ms-1" aria-label="输入法"><svg width="16" height="16" fill="none" stroke="#fff"><path d="M.5.500h15v15H.5zM3.500 3v10M3.500 3.500h9M12.500 3v10H9M3.500 7.500h9"/></svg></button>
      <div class="clock text-center ms-2">18:40<br>2019/10/16</div>
      <button class="plain notif" aria-label="通知"><svg width="17" height="17"><path d="M1 1h15v11h-4.500L8.500 15.500 5.500 12H1z" fill="none" stroke="#fff" stroke-width="1.200"/></svg></button>
      <span class="deskedge"></span>
    </div>
  </div>
</div>
<script src="https://cdn.jsdelivr.net/npm/bootstrap@5.3.0/dist/js/bootstrap.bundle.min.js"></script>
</body>
</html>
